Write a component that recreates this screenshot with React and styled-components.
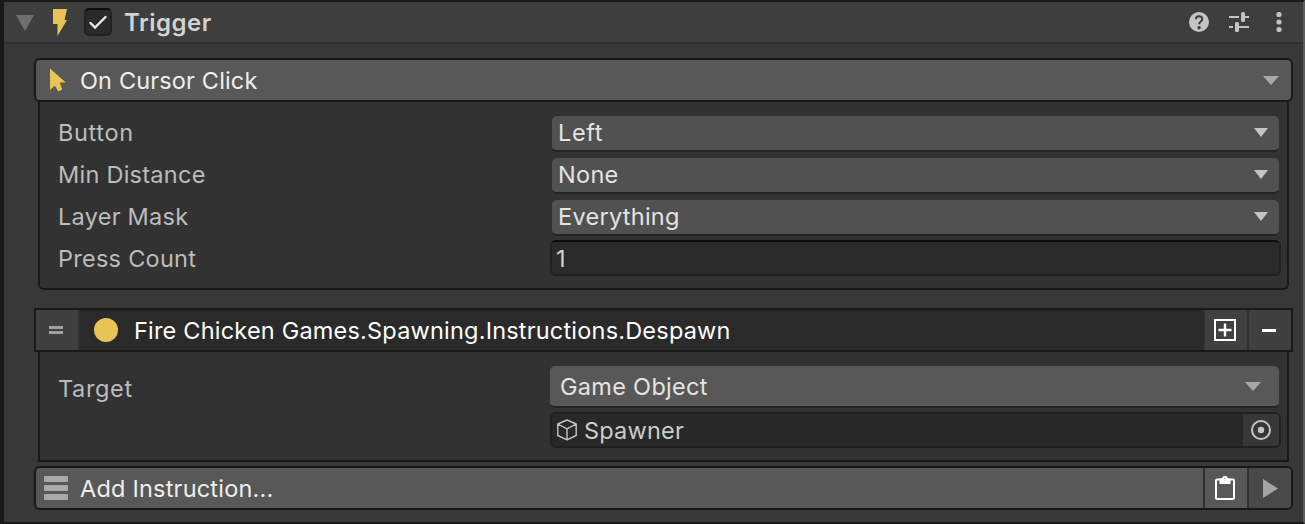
import React from 'react';
import styled, { createGlobalStyle } from 'styled-components';

const GlobalStyle = createGlobalStyle`
  * { box-sizing: border-box; }
  body { margin: 0; background: #191919; }
`;

const Window = styled.div`
  height: 524px;
  border-style: solid;
  border-width: 2px 2px 2px 4px;
  border-color: #191919;
  border-right-color: #5d5d5d;
  background: #383838;
  font-family: Inter, 'Liberation Sans', sans-serif;
  font-size: 23.5px;
  font-weight: 400;
  line-height: 30px;
  color: #bcbcbc;
  overflow: hidden;
`;

const Header = styled.header`
  display: flex;
  align-items: center;
  height: 42px;
  padding: 0 14px 2px 12px;
  background: #3e3e3e;
  border-bottom: 2px solid #303030;
  svg { flex: none; display: block; }
`;

const Checkbox = styled.span`
  display: flex;
  flex: none;
  width: 28px;
  height: 28px;
  margin: 2px 12px 0 12px;
  border: 2px solid #212121;
  border-top-color: #0d0d0d;
  border-radius: 5px;
  background: #2a2a2a;
`;

const Title = styled.h1`
  flex: 1;
  margin: 0;
  padding-top: 4px;
  font-size: 24px;
  font-weight: 600;
  letter-spacing: 0.5px;
  color: #d2d2d2;
`;

const HeaderActions = styled.div`
  display: flex;
  gap: 20px;
  margin-top: 2px;
`;

const Content = styled.main`
  padding: 14px 10px 0 30px;
`;

const Bar = styled.div`
  display: flex;
  height: 44px;
  border: 2px solid #191919;
  border-radius: ${(p) => (p.$square ? 0 : 6)}px;
  background: ${(p) => (p.$square ? '#2a2a2a' : '#585858')};
  color: ${(p) => (p.$square ? '#ffffff' : '#eeeeee')};
  overflow: hidden;
  svg { flex: none; display: block; }
`;

const BarLabel = styled.div`
  display: flex;
  flex: 1;
  align-items: center;
  gap: ${(p) => p.$gap}px;
  padding: 0 12px 0 ${(p) => p.$inset}px;
`;

const Text = styled.span`
  flex: 1;
  padding-top: ${(p) => p.$drop ?? 2}px;
  white-space: nowrap;
  letter-spacing: ${(p) => p.$spacing ?? 0.3}px;
`;

const BarButton = styled.span`
  display: flex;
  flex: none;
  width: 44px;
  padding: ${(p) => p.$pad || '0 2px 0 0'};
  align-items: center;
  justify-content: center;
  border-left: 2px solid #303030;
  background: ${(p) => p.$tone || '#404040'};
`;

const Handle = styled(BarButton)`
  border-left: 0;
  border-right: 2px solid #303030;
`;

const Panel = styled.section`
  display: flex;
  flex-direction: column;
  height: ${(p) => p.$height}px;
  margin: 0 4px ${(p) => p.$after}px;
  padding: 14px 6px 0 18px;
  border: 2px solid #191919;
  border-top: 0;
  border-radius: ${(p) => (p.$rounded ? '0 0 6px 6px' : 0)};
  background: #323232;
`;

const Row = styled.div`
  display: flex;
  flex: none;
  height: ${(p) => p.$height || 42}px;
`;

const Label = styled.span`
  flex: none;
  width: 492px;
  padding-top: ${(p) => p.$drop ?? 2}px;
  letter-spacing: ${(p) => p.$spacing ?? 0.26}px;
`;

const Fields = styled.div`
  display: flex;
  flex: 1;
  flex-direction: column;
  gap: 4px;
`;

const Dropdown = styled.div`
  display: flex;
  flex: ${(p) => (p.$tall ? 'none' : 1)};
  align-items: center;
  height: ${(p) => (p.$tall ? 42 : 36)}px;
  margin: ${(p) => (p.$tall ? '0 2px 0 0' : '0 2px')};
  padding: 0 ${(p) => (p.$tall ? 18 : 11)}px 0 ${(p) => (p.$tall ? 10 : 6)}px;
  border-bottom: 2px solid #242424;
  border-radius: 5px;
  background: ${(p) => (p.$tall ? '#585858' : '#515151')};
  color: #e4e4e4;
`;

const Input = styled.div`
  display: flex;
  flex: 1;
  align-items: center;
  height: 36px;
  margin-top: -2px;
  padding-left: 4px;
  border: 2px solid #212121;
  border-top-color: #0d0d0d;
  border-radius: 6px;
  background: #2a2a2a;
  color: #d2d2d2;
`;

const ObjectField = styled.div`
  display: flex;
  flex: none;
  align-items: center;
  height: 36px;
  padding-left: 5px;
  gap: 7px;
  border: 2px solid #202020;
  border-radius: 6px;
  background: #282828;
  color: #cccccc;
  overflow: hidden;
`;

const Picker = styled.span`
  display: flex;
  align-items: center;
  justify-content: center;
  width: 36px;
  height: 32px;
  background: #373737;
`;

const CaretIcon = styled.svg`
  flex: none;
  margin-top: ${(p) => (p.$large ? 1 : -1)}px;
`;

const Caret = ({ large }) => (
  <CaretIcon $large={large} width={large ? 16 : 14} height="9" viewBox="0 0 14 9" preserveAspectRatio="none">
    <path d="M0 0h14L7 9z" fill={large ? '#a8a8a8' : '#c4c4c4'} />
  </CaretIcon>
);

const OptionRow = ({ label, value, labelSpacing, valueSpacing }) => (
  <Row>
    <Label $spacing={labelSpacing}>{label}</Label>
    <Dropdown><Text $drop={0} $spacing={valueSpacing}>{value}</Text><Caret /></Dropdown>
  </Row>
);

export default function App() {
  return (
    <>
      <GlobalStyle />
      <Window>
        <Header>
          <svg width="56" height="38" viewBox="16 2 56 38">
            <path d="M16 15h18l-9 16z" fill="#6e6e6e" />
            <path d="M53 9h14l-2.500 11H67L57.500 36V24H53z" fill="#e9c357" />
          </svg>
          <Checkbox>
            <svg width="24" height="24" viewBox="86 10 24 24">
              <path d="M90.500 23l4.500 4.500 10.500-10.500" fill="none" stroke="#e8e8e8" strokeWidth="2.400" strokeLinecap="round" />
            </svg>
          </Checkbox>
          <Title>Trigger</Title>
          <HeaderActions>
            <svg width="20" height="20" viewBox="0 0 20 20">
              <circle cx="10" cy="10" r="10" fill="#c4c4c4" />
              <path d="M6.900 7.300c0-1.900 1.300-3 3.200-3s3.200 1.100 3.200 2.800c0 2.400-3.200 2.500-3.200 5.100" fill="none" stroke="#3e3e3e" strokeWidth="2" />
              <circle cx="10.100" cy="15.700" r="1.700" fill="#3e3e3e" />
            </svg>
            <svg width="20" height="20" viewBox="0 0 20 20" fill="#c4c4c4">
              <path d="M0 4h10v2H0zM16 4h4v2h-4zM0 14h4v2H0zM10 14h10v2H10z" />
              <rect x="12" y="0" width="4" height="10" rx="1.500" />
              <rect x="6" y="10" width="4" height="10" rx="1.500" />
            </svg>
            <svg width="20" height="20" viewBox="0 0 20 20" fill="#c4c4c4">
              <circle cx="10" cy="2.500" r="2.600" />
              <circle cx="10" cy="10" r="2.600" />
              <circle cx="10" cy="17.500" r="2.600" />
            </svg>
          </HeaderActions>
        </Header>
        <Content>
          <Bar>
            <BarLabel $gap={14} $inset={14}>
              <svg width="16" height="24" viewBox="50 68 16 24">
                <path d="M50 68.500L65.800 82.500H59.800L62.200 89.500L58.400 91.600L54.900 85.800L50 90z" fill="#e9c357" />
              </svg>
              <Text $drop={1} $spacing={0.15}>On Cursor Click</Text>
              <Caret large />
            </BarLabel>
          </Bar>
          <Panel $height={188} $after={18} $rounded>
            <OptionRow label="Button" labelSpacing={0.65} value="Left" valueSpacing={0.6} />
            <OptionRow label="Min Distance" value="None" valueSpacing={0.3} />
            <OptionRow label="Layer Mask" value="Everything" valueSpacing={0.28} />
            <Row>
              <Label>Press Count</Label>
              <Input><Text>1</Text></Input>
            </Row>
          </Panel>
          <Bar $square>
            <Handle>
              <svg width="14" height="8" fill="#a0a0a0"><path d="M0 0h14v3H0zM0 5h14v3H0z" /></svg>
            </Handle>
            <BarLabel $gap={16} $inset={14}>
              <svg width="24" height="24"><circle cx="12" cy="12" r="12" fill="#e9c357" /></svg>
              <Text $drop={1} $spacing={0.2}>Fire Chicken Games.Spawning.Instructions.Despawn</Text>
            </BarLabel>
            <BarButton>
              <svg width="22" height="22" viewBox="0 0 22 22" fill="none" stroke="#fff" strokeWidth="2">
                <rect x="1" y="1" width="20" height="20" />
                <path d="M11 4.500v13M4.500 11h13" strokeWidth="2.400" />
              </svg>
            </BarButton>
            <BarButton>
              <svg width="14" height="3"><path d="M0 0h14v3H0z" fill="#fff" /></svg>
            </BarButton>
          </Bar>
          <Panel $height={110} $after={4}>
            <Row $height={82}>
              <Label $drop={8} $spacing={0.65}>Target</Label>
              <Fields>
                <Dropdown $tall><Text $drop={1} $spacing={0.3}>Game Object</Text><Caret large /></Dropdown>
                <ObjectField>
                  <svg width="20" height="22" viewBox="0 0 20 22" fill="none" stroke="#c4c4c4" strokeWidth="1.400" strokeLinejoin="round">
                    <path d="M10 1L19.200 5V16.500L10 20.800L.8 16.500V5zM.8 5L10 9.800L19.200 5M10 9.800v11" />
                  </svg>
                  <Text $spacing={0.2}>Spawner</Text>
                  <Picker>
                    <svg width="20" height="20">
                      <circle cx="10" cy="10" r="9" fill="none" stroke="#c4c4c4" strokeWidth="2" />
                      <circle cx="10" cy="10" r="3.200" fill="#c4c4c4" />
                    </svg>
                  </Picker>
                </ObjectField>
              </Fields>
            </Row>
          </Panel>
          <Bar>
            <BarLabel $gap={12} $inset={8}>
              <svg width="24" height="24" fill="#aaaaaa">
                <rect width="24" height="6" rx="1" />
                <rect y="9" width="24" height="6" rx="1" />
                <rect y="18" width="24" height="6" rx="1" />
              </svg>
              <Text $drop={1} $spacing={0.21}>Add Instruction...</Text>
            </BarLabel>
            <BarButton $tone="#585858">
              <svg width="20" height="26" viewBox="0 0 20 26">
                <path d="M2 4.500h16a1 1 0 0 1 1 1V23a1 1 0 0 1-1 1H2a1 1 0 0 1-1-1V5.500a1 1 0 0 1 1-1z" fill="none" stroke="#fff" strokeWidth="2" />
                <path fillRule="evenodd" d="M4.500 3.500h2.300a3.300 3.300 0 0 1 6.400 0h2.300V9h-11zM10 3a1.200 1.200 0 1 0 0 2.400A1.200 1.200 0 0 0 10 3z" fill="#fff" />
              </svg>
            </BarButton>
            <BarButton $tone="#494949" $pad="0 0 0 1px">
              <svg width="15" height="19"><path d="M0 0L15 9.500L0 19z" fill="#a4a4a4" /></svg>
            </BarButton>
          </Bar>
        </Content>
      </Window>
    </>
  );
}
